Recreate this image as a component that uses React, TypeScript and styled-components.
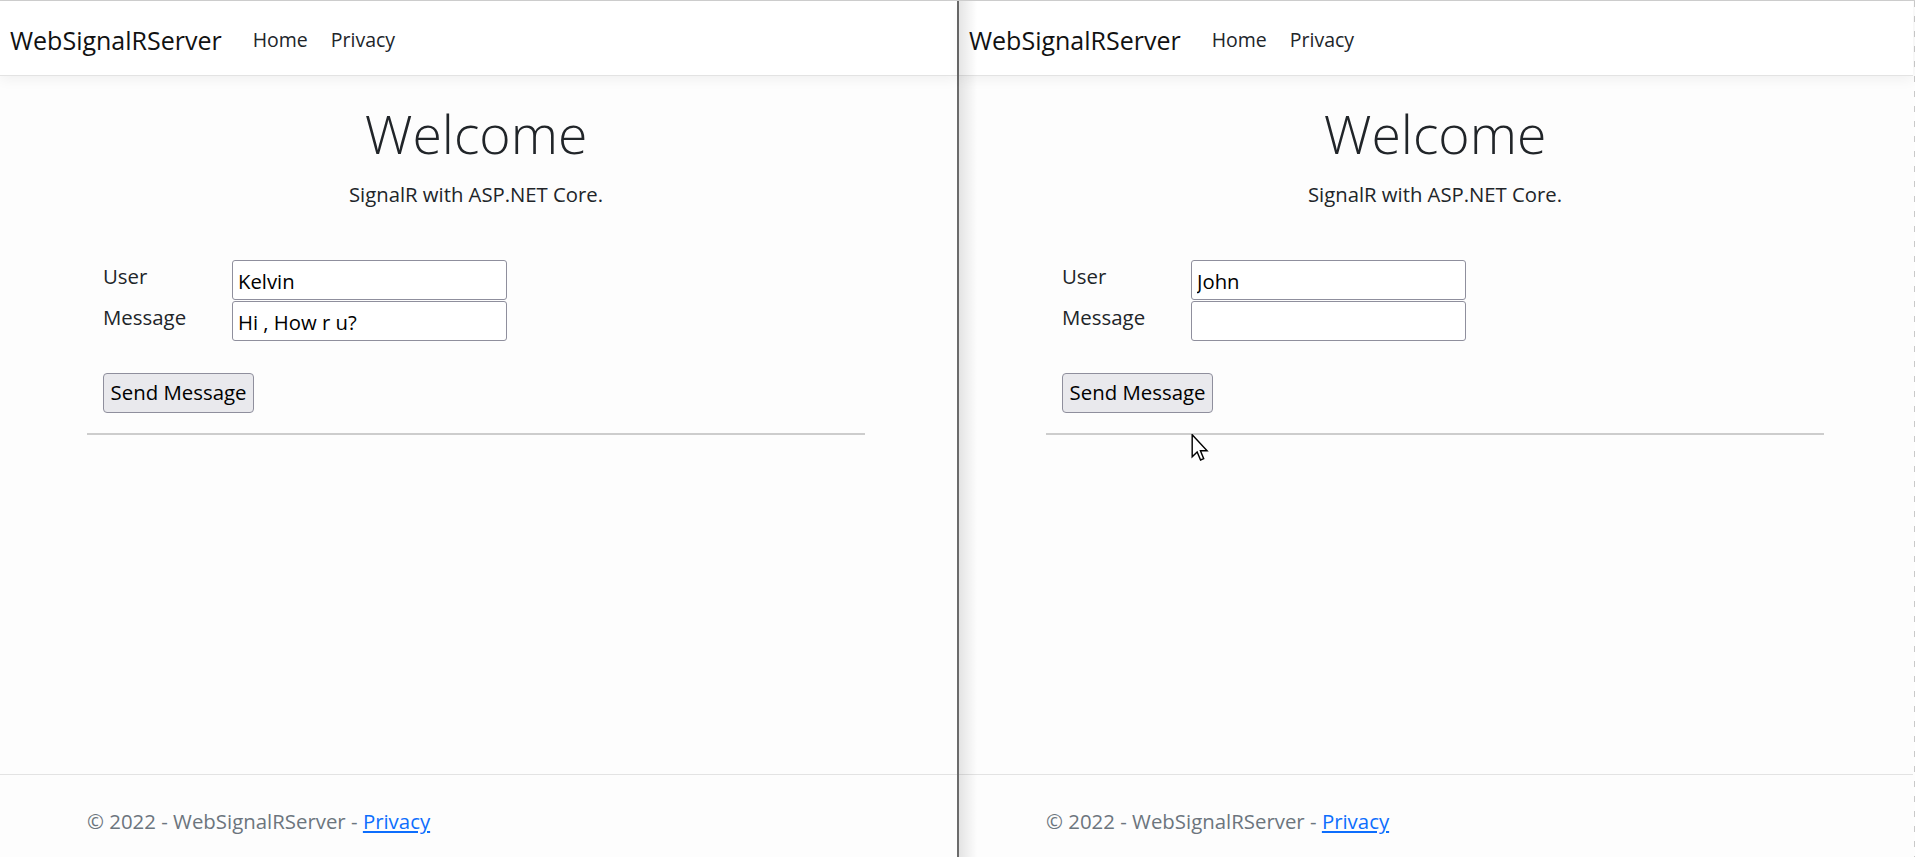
import React from "react";
import styled, { createGlobalStyle } from "styled-components";

const GlobalStyle = createGlobalStyle`
  html, body {
    margin: 0;
    padding: 0;
    background: #fdfdfd;
    font-family: "Open Sans", "Noto Sans", "Liberation Sans", sans-serif;
    color: #212529;
    overflow: hidden;
  }
  * { box-sizing: border-box; }
`;

const Page = styled.div`
  display: flex;
  width: 1915px;
  height: 857px;
  border-top: 1px solid #cfcfcf;
  background: #fdfdfd;
`;

const Window = styled.div<{ $width: number }>`
  position: relative;
  display: flex;
  flex-direction: column;
  width: ${(p) => p.$width}px;
  flex: 0 0 auto;
  height: 100%;
  background: #fdfdfd;
`;

const Divider = styled.div`
  position: relative;
  flex: 0 0 2px;
  background: #6b6b6b;
  &::after {
    content: "";
    position: absolute;
    top: 0;
    bottom: 0;
    left: 2px;
    width: 18px;
    background: linear-gradient(to right, rgba(0, 0, 0, 0.1), rgba(0, 0, 0, 0));
    pointer-events: none;
    z-index: 2;
  }
`;

const DashedEdge = styled.div`
  flex: 0 0 1px;
  margin-left: 1px;
  background: repeating-linear-gradient(
    to bottom,
    #c9c9c9 0px,
    #c9c9c9 6px,
    transparent 6px,
    transparent 15px
  );
`;

const Navbar = styled.nav`
  position: relative;
  display: flex;
  align-items: center;
  height: 75px;
  padding: 3px 0 0 10px;
  background: #ffffff;
  border-bottom: 1px solid #e3e3e3;
  box-shadow: 0 4px 12px rgba(0, 0, 0, 0.05);
  z-index: 1;
`;

const Brand = styled.a`
  font-size: 25px;
  color: #111;
  text-decoration: none;
  margin-right: 31px;
`;

const NavLink = styled.a`
  font-size: 19.5px;
  color: #212529;
  text-decoration: none;
  margin-right: 23px;
`;

const Main = styled.main`
  flex: 1;
  display: flex;
  flex-direction: column;
`;

const Container = styled.div`
  width: 778px;
  margin: 0 0 0 87px;
`;

const Hero = styled.section`
  text-align: center;
  padding-top: 26px;
`;

const Title = styled.h1`
  margin: 0;
  font-size: 53.5px;
  font-weight: 300;
  line-height: 1.2;
  color: #212529;
`;

const Subtitle = styled.p`
  margin: 13px 0 0;
  font-size: 20.3px;
  line-height: 1.5;
`;

const Form = styled.div`
  display: flex;
  flex-direction: column;
  gap: 1px;
  margin-top: 50px;
  padding-left: 16px;
`;

const FieldRow = styled.div`
  display: grid;
  grid-template-columns: 129px 275px;
  align-items: start;
`;

const Label = styled.label`
  font-size: 20.4px;
  line-height: 30px;
  padding-top: 1px;
`;

const TextInput = styled.input`
  width: 275px;
  height: 40px;
  padding: 2px 5px 0;
  font-family: "Open Sans", "Noto Sans", sans-serif;
  font-size: 20.3px;
  color: #000;
  background: #fff;
  border: 1px solid #8f8f9d;
  border-radius: 3px;
  outline: none;
`;

const ButtonRow = styled.div`
  margin-top: 32px;
  padding-left: 16px;
`;

const SendButton = styled.button`
  height: 40px;
  width: 151px;
  padding: 0 4px 2px;
  font-family: "Open Sans", "Noto Sans", sans-serif;
  font-size: 20.4px;
  color: #000;
  background: #e9e9ed;
  border: 1px solid #8f8f9d;
  border-radius: 4px;
`;

const Rule = styled.hr`
  margin: 20px 0 0;
  border: 0;
  height: 2px;
  background: #cdcdcd;
`;

const Footer = styled.footer`
  height: 83px;
  border-top: 1px solid #e3e3e3;
  display: flex;
  align-items: center;
  padding-top: 10px;
`;

const FooterText = styled.div`
  width: 778px;
  margin: 0 0 0 87px;
  font-size: 20.4px;
  color: #6c757d;
`;

const FooterLink = styled.a`
  color: #0d6efd;
  text-decoration: underline;
`;

const Cursor = styled.svg`
  position: absolute;
  left: 232px;
  top: 433px;
  width: 18px;
  height: 27px;
  z-index: 3;
`;

type ClientProps = {
  width: number;
  user: string;
  message: string;
  showCursor?: boolean;
};

function Client({ width, user, message, showCursor }: ClientProps) {
  return (
    <Window $width={width}>
      <Navbar>
        <Brand href="#">WebSignalRServer</Brand>
        <NavLink href="#">Home</NavLink>
        <NavLink href="#">Privacy</NavLink>
      </Navbar>
      <Main>
        <Container>
          <Hero>
            <Title>Welcome</Title>
            <Subtitle>SignalR with ASP.NET Core.</Subtitle>
          </Hero>
          <Form>
            <FieldRow>
              <Label>User</Label>
              <TextInput type="text" defaultValue={user} />
            </FieldRow>
            <FieldRow>
              <Label>Message</Label>
              <TextInput type="text" defaultValue={message} />
            </FieldRow>
          </Form>
          <ButtonRow>
            <SendButton type="button">Send Message</SendButton>
          </ButtonRow>
          <Rule />
        </Container>
      </Main>
      <Footer>
        <FooterText>
          © 2022 - WebSignalRServer - <FooterLink href="#">Privacy</FooterLink>
        </FooterText>
      </Footer>
      {showCursor && (
        <Cursor viewBox="0 0 12 19">
          <path
            d="M0.5 0.5 L0.5 16 L4 12.6 L6.4 18.3 L8.6 17.4 L6.3 11.8 L11 11.8 Z"
            fill="#fff"
            stroke="#000"
            strokeWidth="1"
            strokeLinejoin="miter"
          />
        </Cursor>
      )}
    </Window>
  );
}

export default function App() {
  return (
    <>
      <GlobalStyle />
      <Page>
        <Client width={957} user="Kelvin" message="Hi , How r u?" />
        <Divider />
        <Client width={954} user="John" message="" showCursor />
        <DashedEdge />
      </Page>
    </>
  );
}
